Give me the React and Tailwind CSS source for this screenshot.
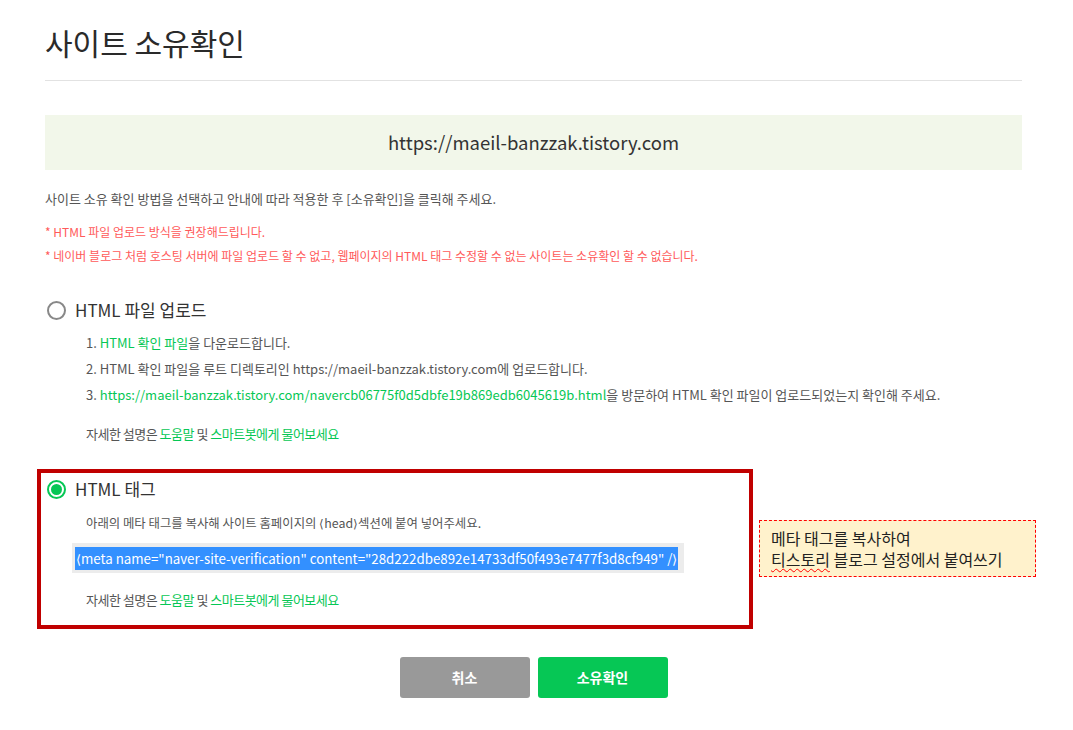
import React from 'react';

const Radio = ({ checked }) => (
    checked ? (
        <span className="w-[19px] h-[19px] rounded-full border-2 border-[#06c755] flex items-center justify-center shrink-0">
            <span className="w-[11px] h-[11px] rounded-full bg-[#06c755]"></span>
        </span>
    ) : (
        <span className="w-[19px] h-[19px] rounded-full border-2 border-[#888] shrink-0"></span>
    )
);

const HelpLine = () => (
    <p className="text-[13px] leading-[20px] text-[#555] tracking-[-0.5px]">
        자세한 설명은 <span className="text-[#06c755]">도움말</span> 및 <span className="text-[#06c755]">스마트봇에게 물어보세요</span>
    </p>
);

export default function App() {
    return (
        <div className="relative w-[1073px] h-[730px] bg-white font-['Noto_Sans_CJK_KR','Noto_Sans',sans-serif] text-[#333]">
            <div className="px-[45px] pt-[22px] w-[977px] box-content">
                {/* 제목 */}
                <h1 className="text-[30px] leading-[40px] text-[#2a2a2a] pb-[18px] border-b border-[#e2e2e2]">사이트 소유확인</h1>

                {/* 사이트 주소 */}
                <div className="mt-[34px] h-[55px] bg-[#f2f7ea] flex items-center justify-center text-[18.5px] text-[#333]">
                    https://maeil-banzzak.tistory.com
                </div>

                <p className="mt-[20px] text-[13px] leading-[18px] text-[#555]">사이트 소유 확인 방법을 선택하고 안내에 따라 적용한 후 [소유확인]을 클릭해 주세요.</p>
                <div className="mt-[15px] flex flex-col gap-[6px] text-[12px] leading-[18px] text-[#ff5a5a]">
                    <p>* HTML 파일 업로드 방식을 권장해드립니다.</p>
                    <p>* 네이버 블로그 처럼 호스팅 서버에 파일 업로드 할 수 없고, 웹페이지의 HTML 태그 수정할 수 없는 사이트는 소유확인 할 수 없습니다.</p>
                </div>

                {/* HTML 파일 업로드 */}
                <div className="mt-[32px]">
                    <div className="flex items-center gap-[9px] pl-[2px] h-[26px]">
                        <Radio />
                        <span className="text-[17px] text-[#333]">HTML 파일 업로드</span>
                    </div>
                    <ol className="mt-[11px] pl-[41px] flex flex-col gap-[8px] text-[13px] leading-[18px] text-[#555]">
                        <li>1. <span className="text-[#06c755]">HTML 확인 파일</span>을 다운로드합니다.</li>
                        <li>2. HTML 확인 파일을 루트 디렉토리인 https://maeil-banzzak.tistory.com에 업로드합니다.</li>
                        <li>3. <span className="text-[#06c755]">https://maeil-banzzak.tistory.com/navercb06775f0d5dbfe19b869edb6045619b.html</span>을 방문하여 HTML 확인 파일이 업로드되었는지 확인해 주세요.</li>
                    </ol>
                    <div className="mt-[20px] pl-[41px]">
                        <HelpLine />
                    </div>
                </div>

                {/* HTML 태그 (강조 박스) */}
                <div className="mt-[25px] ml-[-8px] w-[716px] h-[160px] border-4 border-[#c00000] pl-[6px] pt-[3px]">
                    <div className="flex items-center gap-[9px] h-[26px]">
                        <Radio checked />
                        <span className="text-[17px] text-[#333]">HTML 태그</span>
                    </div>
                    <p className="mt-[12px] pl-[39px] text-[12.4px] leading-[18px] text-[#555]">아래의 메타 태그를 복사해 사이트 홈페이지의 ⟨head⟩섹션에 붙여 넣어주세요.</p>
                    <div className="mt-[11px] ml-[25px] w-[612px] h-[30px] bg-[#ececec] flex items-center px-[3px]">
                        <span className="bg-[#3390ff] text-white text-[13.3px] leading-[23px] px-[1px] whitespace-nowrap">⟨meta name="naver-site-verification" content="28d222dbe892e14733df50f493e7477f3d8cf949" /⟩</span>
                    </div>
                    <div className="mt-[17px] pl-[39px]">
                        <HelpLine />
                    </div>
                </div>

                {/* 버튼 */}
                <div className="mt-[28px] flex justify-center gap-[8px]">
                    <button className="w-[130px] h-[41px] rounded-[3px] bg-[#999] text-white text-[14px] font-bold">취소</button>
                    <button className="w-[130px] h-[41px] rounded-[3px] bg-[#06c755] text-white text-[14px] font-bold">소유확인</button>
                </div>
            </div>

            {/* 설명 메모 */}
            <div className="absolute left-[759px] top-[520px] w-[277px] h-[57px] bg-[#fff2cc] border border-dashed border-[#ff0000] px-[11px] pt-[7px] text-[16px] leading-[21px] text-[#222]">
                <p>메타 태그를 복사하여</p>
                <p><span className="underline decoration-wavy decoration-[#ff0000] decoration-1 underline-offset-2">티스토리</span> 블로그 설정에서 붙여쓰기</p>
            </div>
        </div>
    );
}
